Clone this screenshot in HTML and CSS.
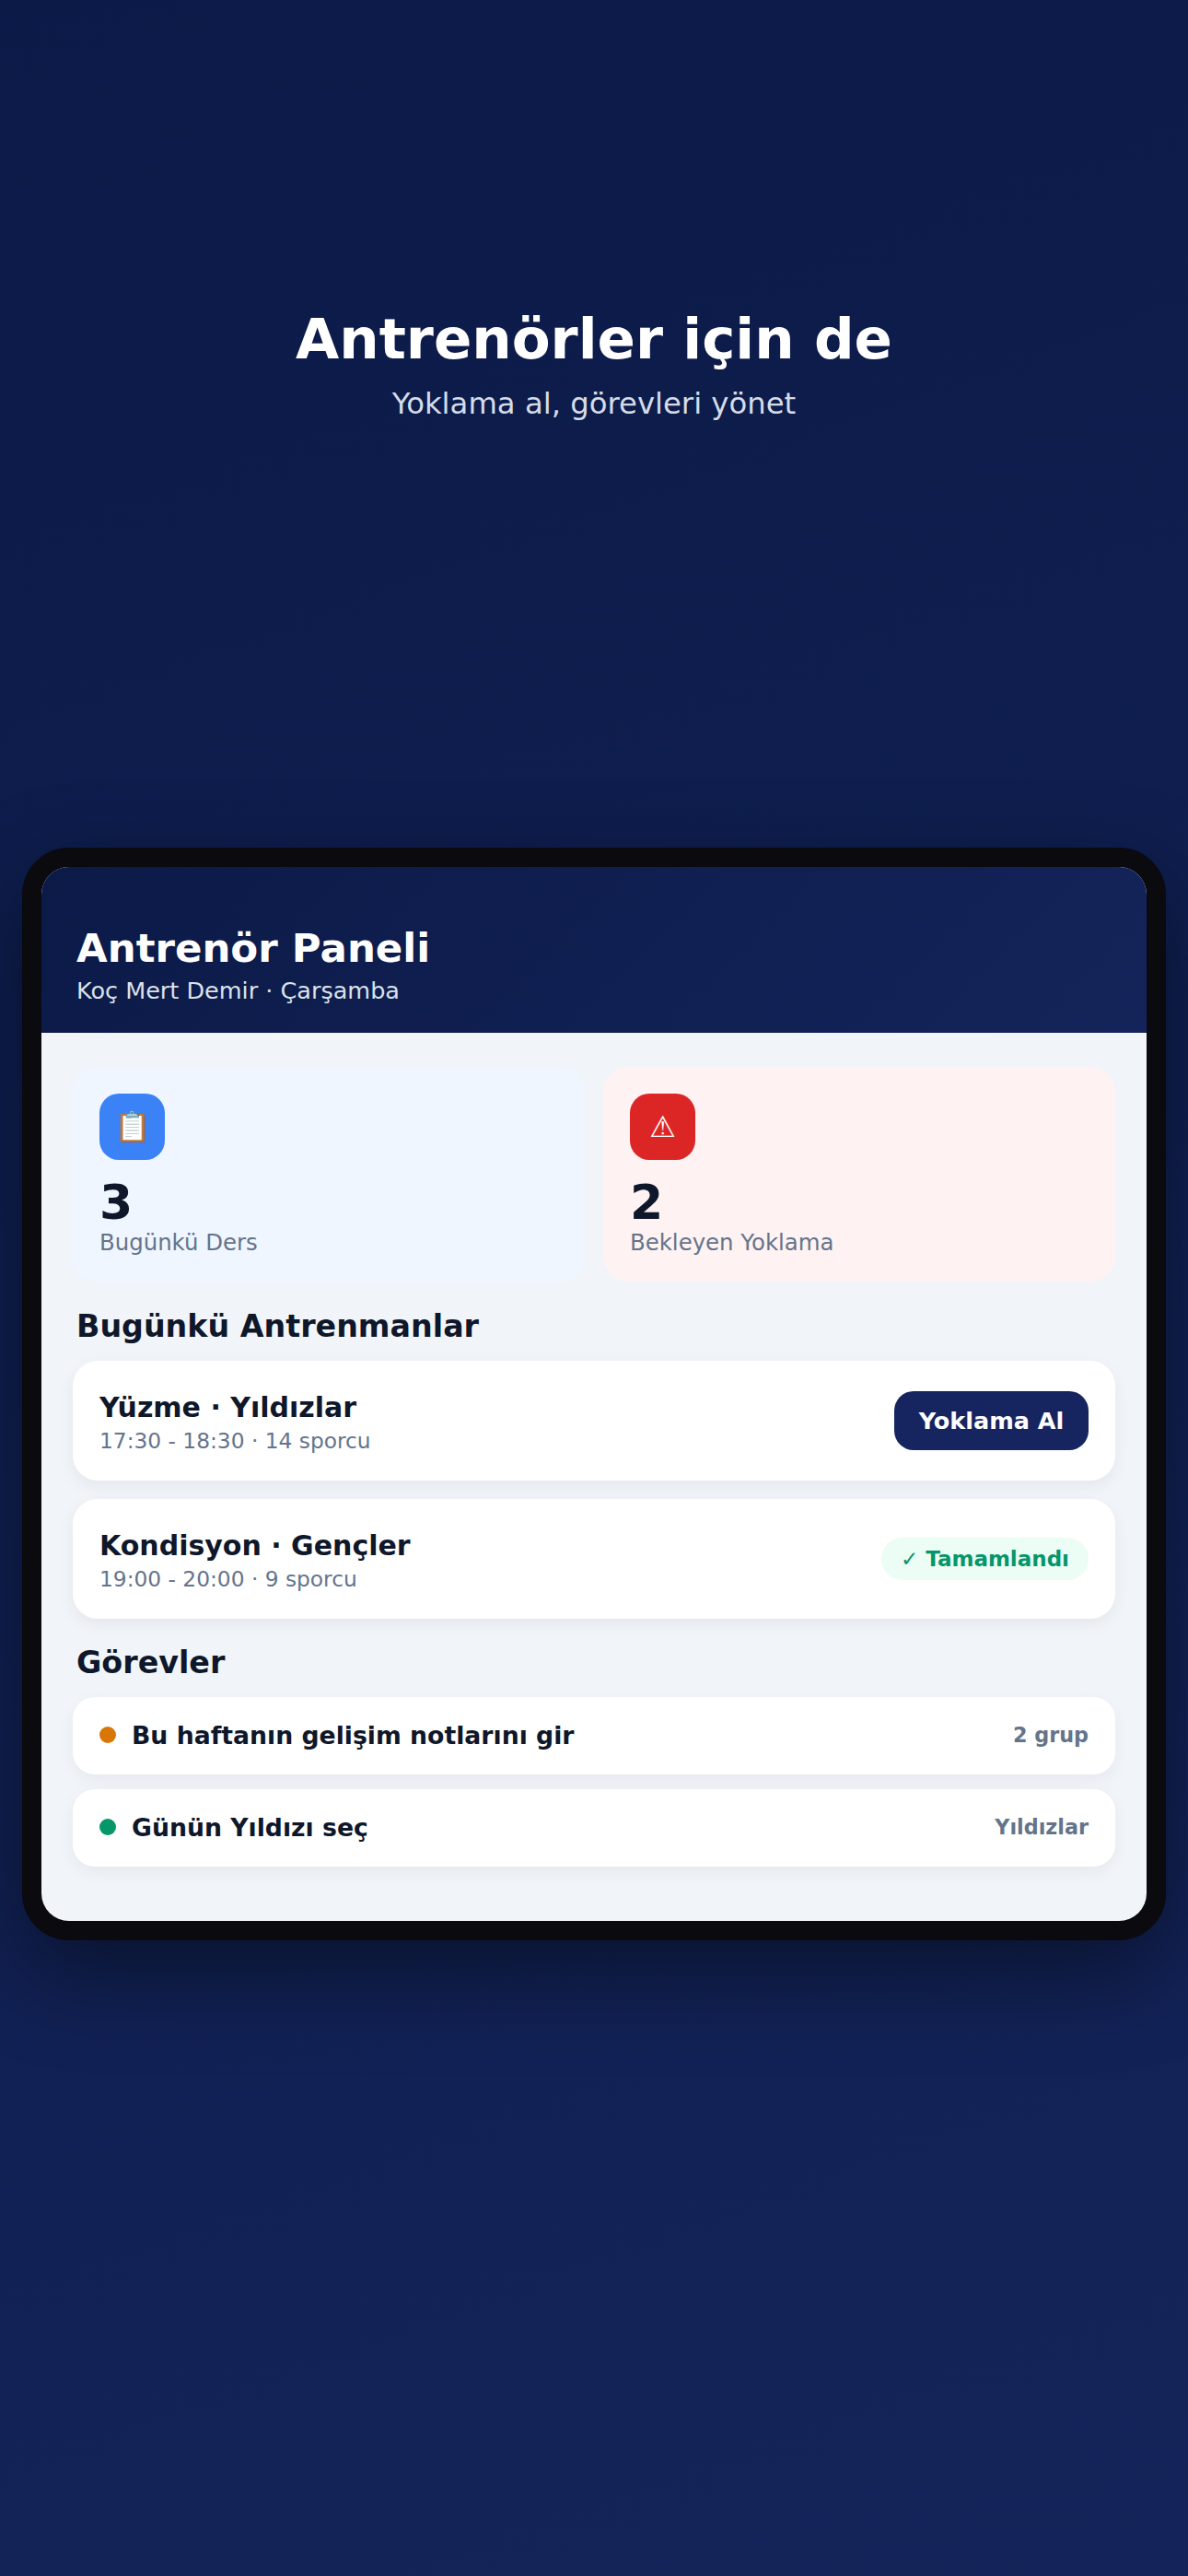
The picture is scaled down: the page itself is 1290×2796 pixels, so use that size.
FILE: index.html
```html
<!DOCTYPE html>
<html lang="tr">
<head>
<meta charset="utf-8">
<title>Antrenör Paneli</title>
<link rel="stylesheet" href="styles.css">
</head>
<body>
<main class="page">
  <header class="hero">
    <h1 class="hero-title">Antrenörler için de</h1>
    <p class="hero-sub">Yoklama al, görevleri yönet</p>
  </header>
  <section class="device">
    <div class="screen">
      <header class="panel-head">
        <h2 class="panel-title">Antrenör Paneli</h2>
        <p class="panel-sub">Koç Mert Demir · Çarşamba</p>
      </header>
      <div class="panel-body">
        <div class="stats">
          <article class="stat stat-blue">
            <div class="stat-icon icon-blue">📋</div>
            <div class="stat-num">3</div>
            <div class="stat-label">Bugünkü Ders</div>
          </article>
          <article class="stat stat-red">
            <div class="stat-icon icon-red">⚠</div>
            <div class="stat-num">2</div>
            <div class="stat-label">Bekleyen Yoklama</div>
          </article>
        </div>
        <h3 class="section-title">Bugünkü Antrenmanlar</h3>
        <div class="sessions">
          <article class="session">
            <div>
              <div class="session-name">Yüzme · Yıldızlar</div>
              <div class="session-meta">17:30 - 18:30 · 14 sporcu</div>
            </div>
            <button class="btn">Yoklama Al</button>
          </article>
          <article class="session">
            <div>
              <div class="session-name">Kondisyon · Gençler</div>
              <div class="session-meta">19:00 - 20:00 · 9 sporcu</div>
            </div>
            <span class="pill">✓ Tamamlandı</span>
          </article>
        </div>
        <h3 class="section-title section-tasks">Görevler</h3>
        <div class="tasks">
          <article class="task">
            <span class="dot dot-orange"></span>
            <span class="task-name">Bu haftanın gelişim notlarını gir</span>
            <span class="task-tag">2 grup</span>
          </article>
          <article class="task">
            <span class="dot dot-green"></span>
            <span class="task-name">Günün Yıldızı seç</span>
            <span class="task-tag">Yıldızlar</span>
          </article>
        </div>
      </div>
    </div>
  </section>
</main>
</body>
</html>
```
FILE: styles.css
```css
* { box-sizing: border-box; margin: 0; padding: 0; }
html, body { width: 1290px; height: 2796px; overflow: hidden; }
body { font-family: "DejaVu Sans", sans-serif; background: #0f1d4f; }
.page {
  width: 1290px; height: 2796px;
  display: flex; flex-direction: column; align-items: center;
  padding: 327px 24px 0;
  background: linear-gradient(160deg, #0b1a47 0%, #14245a 100%);
}
.hero { height: 593px; text-align: center; color: #fff; }
.hero-title { font-size: 61px; line-height: 82px; font-weight: 700; }
.hero-sub { font-size: 32.3px; line-height: 44px; margin-top: 7px; color: #d5dce8; }
.device {
  width: 1242px; height: 1186px;
  border: 21px solid #0a0a0f; border-radius: 51px;
  background: #0a0a0f;
  box-shadow: 0 36px 100px rgba(0,0,0,.45);
}
.screen { height: 100%; border-radius: 30px; overflow: hidden; background: #f1f5f9; }
.panel-head {
  height: 180px; padding: 60px 38px 0;
  background: linear-gradient(135deg, #0b1a47, #14245a);
  color: #fff;
}
.panel-title { font-size: 43.5px; line-height: 56px; font-weight: 700; }
.panel-sub { font-size: 25.5px; line-height: 36px; color: #dbe2ec; }
.panel-body { padding: 37px 34px 0; }
.stats { display: grid; grid-template-columns: 556px 556px; gap: 20px; }
.stat { height: 233px; border-radius: 27px; padding: 29px 29px 0; }
.stat-blue { background: #eff6ff; }
.stat-red { background: #fef2f2; }
.stat-icon {
  width: 71px; height: 72px; border-radius: 21px;
  display: flex; align-items: center; justify-content: center;
  font-size: 32px; color: #fff;
}
.icon-blue { background: #3b82f6; }
.icon-red { background: #dc2626; }
.stat-num { font-size: 52px; line-height: 62px; font-weight: 700; color: #0f172a; margin-top: 15px; }
.stat-label { font-size: 24.4px; line-height: 26px; color: #64748b; }
.section-title { font-size: 33.3px; line-height: 44px; font-weight: 700; color: #0f172a; margin: 27px 0 15px 4px; }
.section-tasks { margin-top: 26px; margin-bottom: 15px; }
.sessions { display: flex; flex-direction: column; gap: 20px; }
.session {
  height: 130px; padding: 0 29px;
  background: #fff; border-radius: 27px;
  box-shadow: 0 6px 18px rgba(15,23,42,.06);
  display: flex; align-items: center; justify-content: space-between;
}
.session-name { font-size: 30px; line-height: 40px; font-weight: 700; color: #0f172a; margin-top: 4px; }
.session-meta { font-size: 23.3px; line-height: 32px; color: #64748b; }
.btn {
  width: 211px; height: 64px; border: 0; border-radius: 21px;
  background: #16255f; color: #fff;
  font: 700 25.5px "DejaVu Sans", sans-serif;
}
.pill {
  height: 46px; padding: 0 21px; border-radius: 23px;
  background: #ecfdf5; color: #059669;
  font-size: 23px; font-weight: 700;
  display: flex; align-items: center;
}
.tasks { display: flex; flex-direction: column; gap: 16px; }
.task {
  height: 84px; padding: 0 29px 2px;
  background: #fff; border-radius: 24px;
  box-shadow: 0 6px 18px rgba(15,23,42,.05);
  display: flex; align-items: center; gap: 17px;
}
.dot { width: 18px; height: 18px; border-radius: 50%; }
.dot-orange { background: #d97706; }
.dot-green { background: #059669; }
.task-name { flex: 1; font-size: 26.7px; font-weight: 700; color: #0f172a; }
.task-tag { font-size: 22.3px; font-weight: 700; color: #64748b; }
```
